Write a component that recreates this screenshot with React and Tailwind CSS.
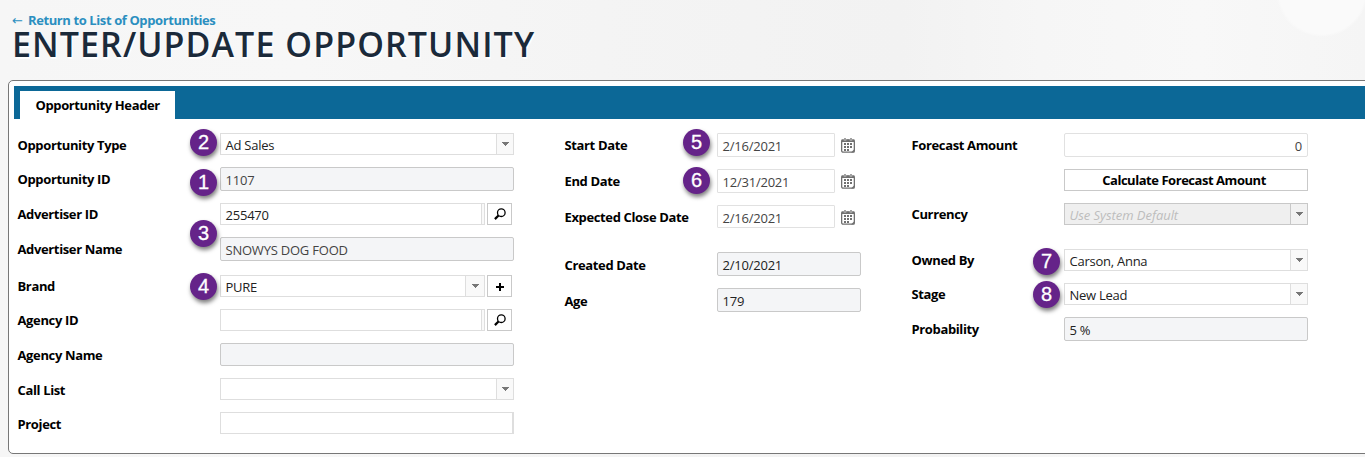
import React from "react";

function Badge({ n, className }) {
  return (
    <span
      className={`absolute flex h-[27px] w-[27px] items-center justify-center rounded-full bg-[#652389] pb-px font-['Liberation_Sans',sans-serif] text-[20px] leading-none text-white shadow-[1px_3px_4px_rgba(0,0,0,0.5)] [-webkit-text-stroke:0.3px_#fff] ${className}`}
    >
      {n}
    </span>
  );
}

function Row({ label, labelWidth, className, low, children }) {
  return (
    <div className={`relative flex ${className}`}>
      <div className={`flex shrink-0 items-center ${low ? "pt-[2px]" : ""} ${labelWidth}`}>
        <span className="text-[13px] leading-[18px] font-bold whitespace-nowrap tracking-[-0.36px] text-black">{label}</span>
      </div>
      {children}
    </div>
  );
}

function Arrow() {
  return (
    <svg width="7" height="4" viewBox="0 0 7 4" shapeRendering="crispEdges">
      <path d="M0 0h7v1h-1v1h-1v1h-1v1h-1v-1h-1v-1h-1v-1h-1z" fill="#777" />
    </svg>
  );
}

function Text({ children, className = "pt-[2px]" }) {
  return <span className={`pl-[4.5px] text-[13px] leading-[18px] whitespace-nowrap tracking-[-0.22px] ${className}`}>{children}</span>;
}

function Select({ value, width, button = "w-[17px]", disabled }) {
  return (
    <div className={`flex border ${width} ${disabled ? "border-[#c8c8c8] bg-[#efefef]" : "border-[#dedede] bg-white"}`}>
      <span
        className={`flex-1 pt-[2px] pl-[4.5px] text-[13px] leading-[18px] whitespace-nowrap ${disabled ? "tracking-[-0.05px] text-[#bdbdbd] italic" : "tracking-[-0.25px] text-[#222]"}`}
      >
        {value}
      </span>
      <div className={`flex items-center justify-center border-l ${button} ${disabled ? "border-[#c8c8c8] bg-[#f2f2f2]" : "border-[#dedede] bg-[#f9f9f9]"}`}>
        <Arrow />
      </div>
    </div>
  );
}

function ReadOnly({ value, width, className = "text-[#444]" }) {
  return (
    <div className={`flex rounded-[2px] border border-[#c9c9c9] bg-[#f4f5f7] ${width}`}>
      <Text className={`pt-[3px] ${className}`}>{value}</Text>
    </div>
  );
}

function Lookup({ value }) {
  return (
    <>
      <div className="flex w-[265px] border border-[#dedede] bg-white">
        <Text className="flex-1 pt-[2px] text-[#222]">{value}</Text>
        <div className="w-[3px] border-l border-[#dedede] bg-[#f9f9f9]" />
      </div>
      <IconButton className="pl-px">
        <svg width="12" height="12" viewBox="0 0 12 12" fill="none" stroke="#000">
          <circle cx="7.3" cy="4.7" r="3.8" strokeWidth="1.3" />
          <path d="M4.5 7.5L0.9 11.1" strokeWidth="2.2" />
        </svg>
      </IconButton>
    </>
  );
}

function IconButton({ children, className }) {
  return <button className={`ml-[2px] flex w-[25px] items-center justify-center border border-[#c9c9c9] bg-white ${className}`}>{children}</button>;
}

function DateField({ value }) {
  return (
    <>
      <div className="flex w-[118px] rounded-[1px] border border-[#e1e1e1] bg-white">
        <Text className="pt-[3px] text-[#444]">{value}</Text>
      </div>
      <svg width="14" height="15" viewBox="0 0 14 15" className="mt-[5px] ml-[6px]">
        <rect x="0.65" y="2" width="12.7" height="12.2" rx="1.5" fill="#fff" stroke="#707070" strokeWidth="1.3" />
        <path d="M0.5 1.6h13v2.4h-13z" fill="#707070" />
        <path d="M4 0v2.6M10 0v2.6" stroke="#fff" strokeWidth="2.4" />
        <path d="M4 0v2.4M10 0v2.4" stroke="#707070" strokeWidth="1.3" />
        <path d="M3 5h2v2h-2zM6 5h2v2h-2zM9 5h2v2h-2zM3 8h2v2h-2zM6 8h2v2h-2zM9 8h2v2h-2zM3 11h2v2h-2zM6 11h2v2h-2z" fill="#707070" />
        <path d="M10 14.5l3.5-3.5v3.5z" fill="#707070" />
      </svg>
    </>
  );
}

const L1 = "w-[203px] pl-[0.5px]";
const L2 = "w-[153px] pl-[0.5px]";
const L3 = "w-[153px] pl-[0.5px]";

export default function App() {
  return (
    <div className="h-[457px] w-[1365px] overflow-hidden bg-[#f5f5f5] bg-[radial-gradient(circle_at_1322px_-9px,#fafafa_0_43px,transparent_46px),linear-gradient(90deg,#f6f6f6,#f7f7f7_300px,#f4f4f4_600px,#f2f2f2_900px,#f6f6f6_1040px,#f8f8f8_1200px,#f5f5f5_1365px)] font-['Open_Sans',sans-serif]">
      <header className="flex h-[80px] flex-col pl-[12px]">
        <a className="mt-[11px] h-[18px] text-[13px] leading-[18px] font-bold whitespace-nowrap tracking-[-0.4px] text-[#2b8fc0]">
          <span className="inline-block w-[16px] font-['DejaVu_Sans',sans-serif] font-normal">←</span>Return to List of Opportunities
        </a>
        <h1 className="mt-[-1px] h-[32px] text-[34px] leading-[32px] font-semibold whitespace-nowrap tracking-[1.08px] text-[#1b2a3a] [text-shadow:1px_2px_1px_#fff]">
          ENTER/UPDATE OPPORTUNITY
        </h1>
      </header>

      <main className="ml-[8px] h-[374px] w-[1380px] rounded-[5px] border border-[#777] bg-white pt-[5px] pl-[5px]">
        <div className="flex h-[33px] bg-[#0c6897] pt-[5px] pl-[6px]">
          <div className="flex h-[28px] w-[155px] items-center bg-white pl-[15.5px] text-[13px] leading-[18px] font-bold whitespace-nowrap tracking-[-0.38px] text-black">
            Opportunity Header
          </div>
        </div>

        <div className="flex pt-[14px] pl-[3px]">
          <section className="w-[547px]">
            <Row label="Opportunity Type" labelWidth={L1} low className="h-[22px]">
              <Badge n={2} className="top-[-4px] left-[173px]" />
              <Select value="Ad Sales" width="w-[294px]" />
            </Row>
            <Row label="Opportunity ID" labelWidth={L1} className="mt-[12px] h-[24px]">
              <Badge n={1} className="top-[2px] left-[173px]" />
              <ReadOnly value="1107" width="w-[294px]" />
            </Row>
            <Row label="Advertiser ID" labelWidth={L1} className="mt-[12px] h-[22px]">
              <Lookup value="255470" />
            </Row>
            <Row label="Advertiser Name" labelWidth={L1} className="mt-[12px] h-[24px]">
              <Badge n={3} className="top-[-17px] left-[173px]" />
              <ReadOnly value="SNOWYS DOG FOOD" width="w-[294px]" />
            </Row>
            <Row label="Brand" labelWidth={L1} className="mt-[14px] h-[22px]">
              <Badge n={4} className="top-[-2px] left-[173px]" />
              <Select value="PURE" width="w-[265px]" button="w-[19px]" />
              <IconButton className="pr-px">
                <svg width="9" height="9" viewBox="0 0 9 9" shapeRendering="crispEdges">
                  <path d="M4 1h2v3h3v2h-3v3h-2v-3h-3v-2h3z" fill="#000" />
                </svg>
              </IconButton>
            </Row>
            <Row label="Agency ID" labelWidth={L1} className="mt-[12px] h-[22px]">
              <Lookup value="" />
            </Row>
            <Row label="Agency Name" labelWidth={L1} className="mt-[12px] h-[23px]">
              <ReadOnly value="" width="w-[294px]" />
            </Row>
            <Row label="Call List" labelWidth={L1} low className="mt-[12px] h-[22px]">
              <Select value="" width="w-[294px]" />
            </Row>
            <Row label="Project" labelWidth={L1} low className="mt-[12px] h-[22px]">
              <div className="w-[294px] border border-r-2 border-[#dedede] bg-white" />
            </Row>
          </section>

          <section className="w-[347px]">
            <Row label="Start Date" labelWidth={L2} className="h-[24px]">
              <Badge n={5} className="top-[-4px] left-[119px]" />
              <DateField value="2/16/2021" />
            </Row>
            <Row label="End Date" labelWidth={L2} className="mt-[12px] h-[24px]">
              <Badge n={6} className="top-[-2px] left-[119px]" />
              <DateField value="12/31/2021" />
            </Row>
            <Row label="Expected Close Date" labelWidth={L2} className="mt-[12px] h-[23px]">
              <DateField value="2/16/2021" />
            </Row>
            <Row label="Created Date" labelWidth={L2} low className="mt-[24px] h-[24px]">
              <ReadOnly value="2/10/2021" width="w-[144px]" className="text-[#222]" />
            </Row>
            <Row label="Age" labelWidth={L2} low className="mt-[12px] h-[24px]">
              <ReadOnly value="179" width="w-[144px]" className="text-[#222]" />
            </Row>
          </section>

          <section>
            <Row label="Forecast Amount" labelWidth={L3} className="h-[24px]">
              <div className="flex w-[244px] justify-end rounded-[2px] border border-[#e1e1e1] bg-white pr-[5px]">
                <Text className="pt-[3px] text-[#444]">0</Text>
              </div>
            </Row>
            <Row label="" labelWidth={L3} className="mt-[12px] h-[22px]">
              <button className="flex w-[244px] items-center justify-center border border-[#c9c9c9] bg-white pr-[4px] text-[13px] leading-[18px] font-bold whitespace-nowrap tracking-[-0.46px] text-black">
                Calculate Forecast Amount
              </button>
            </Row>
            <Row label="Currency" labelWidth={L3} className="mt-[12px] h-[22px]">
              <Select value="Use System Default" width="w-[244px]" disabled />
            </Row>
            <Row label="Owned By" labelWidth={L3} className="mt-[24px] h-[22px]">
              <Badge n={7} className="top-[-1px] left-[122px]" />
              <Select value="Carson, Anna" width="w-[244px]" />
            </Row>
            <Row label="Stage" labelWidth={L3} className="mt-[12px] h-[22px]">
              <Badge n={8} className="top-[-2px] left-[122px]" />
              <Select value="New Lead" width="w-[244px]" />
            </Row>
            <Row label="Probability" labelWidth={L3} className="mt-[12px] h-[24px]">
              <ReadOnly value="5 %" width="w-[244px]" className="text-[#222]" />
            </Row>
          </section>
        </div>
      </main>
    </div>
  );
}
